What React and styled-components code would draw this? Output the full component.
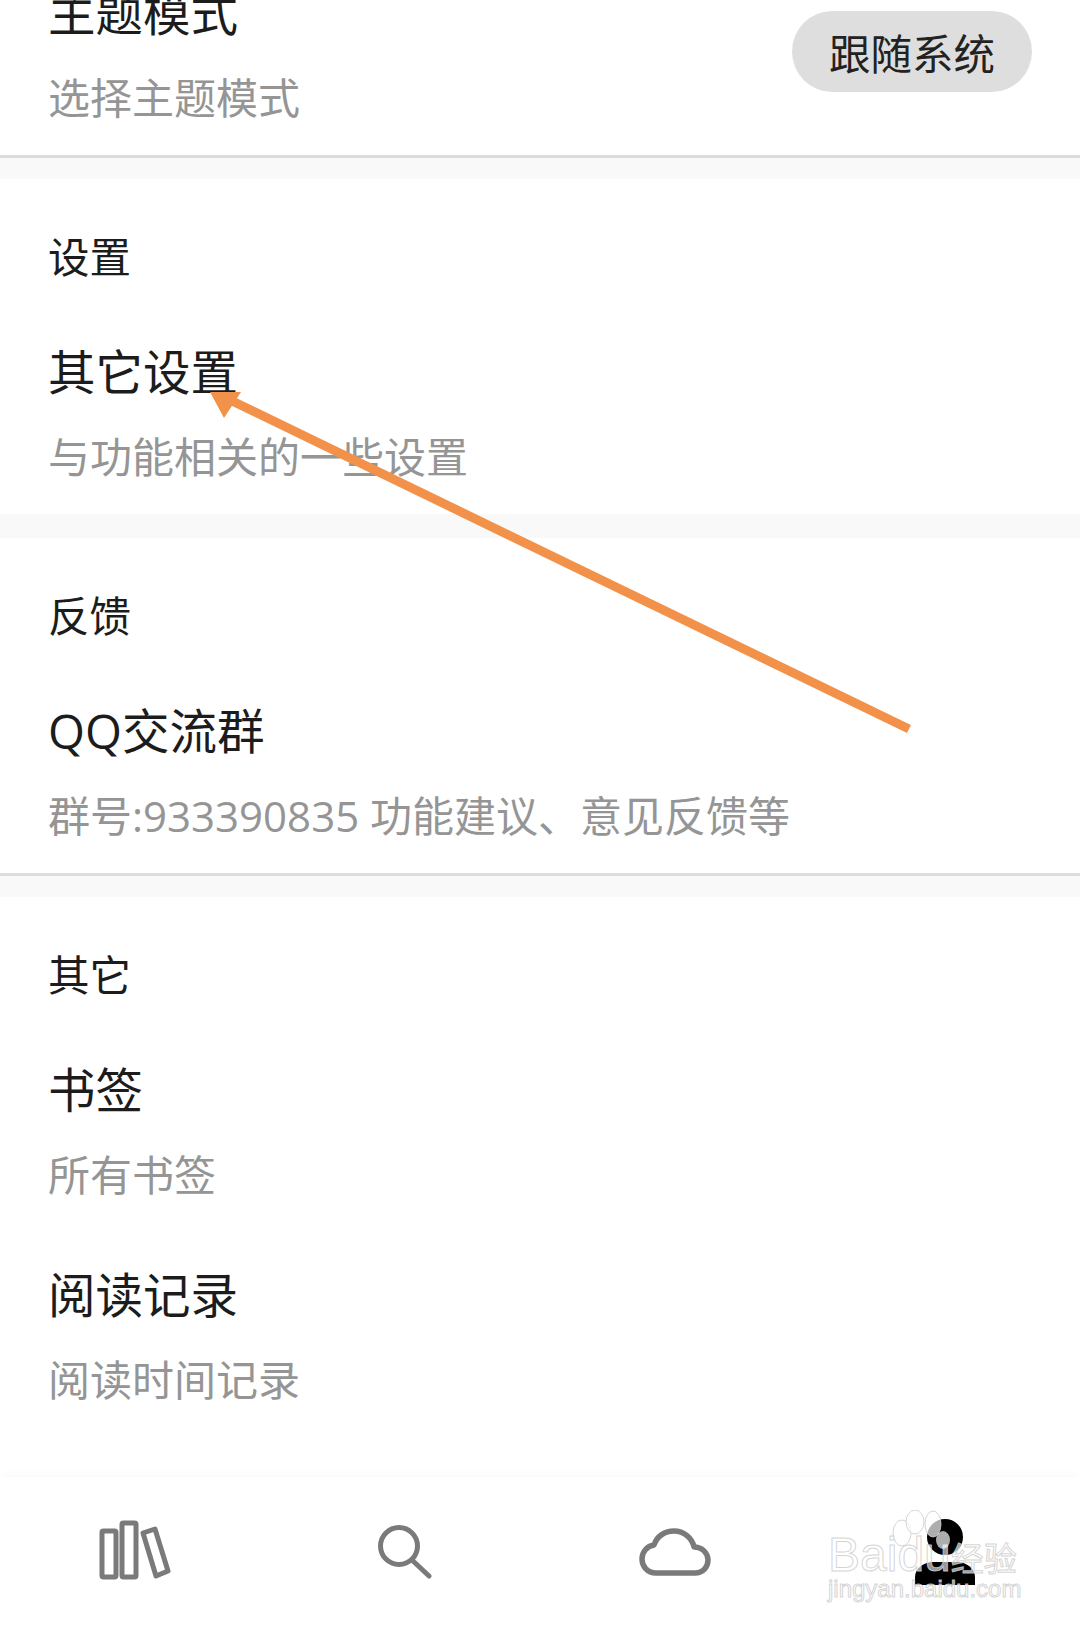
import React from 'react';
import styled, { createGlobalStyle } from 'styled-components';

const GlobalStyle = createGlobalStyle`
  html, body {
    margin: 0;
    padding: 0;
    background: #fff;
    font-family: "Open Sans", "Noto Sans CJK SC", sans-serif;
  }
`;

const Page = styled.div`
  position: relative;
  width: 1080px;
  height: 1627px;
  overflow: hidden;
  background: #fff;
  display: flex;
  flex-direction: column;
`;

const Content = styled.div`
  flex: 1;
`;

const Section = styled.section`
  padding: 48px 48px 27px 48px;
  border-bottom: ${(p) => (p.$line ? '3px solid #dcdcdc' : 'none')};
`;

const TopSection = styled(Section)`
  padding-top: 0;
  margin-top: -17px;
`;

const Band = styled.div`
  height: ${(p) => (p.$short ? '21px' : '24px')};
  background: #f9f9f9;
`;

const SectionTitle = styled.h2`
  margin: 0 0 55px;
  font-size: 41.5px;
  line-height: 60px;
  font-weight: 400;
  color: #1c1c1c;
`;

const Row = styled.div`
  display: flex;
  justify-content: space-between;
  align-items: flex-start;
  & + & {
    margin-top: 60px;
  }
`;

const RowTitle = styled.div`
  font-size: 47.5px;
  line-height: 60px;
  color: #1c1c1c;
`;

const RowSub = styled.div`
  margin-top: 25px;
  font-size: 42px;
  line-height: 60px;
  color: #959595;
`;

const Pill = styled.div`
  margin-top: 28px;
  width: 240px;
  height: 81px;
  border-radius: 41px;
  background: #dedede;
  color: #222;
  font-size: 41.5px;
  display: flex;
  align-items: center;
  justify-content: center;
`;

const Nav = styled.nav`
  height: 150px;
  display: grid;
  grid-template-columns: repeat(4, 270px);
  background: #fff;
  box-shadow: 0 -6px 8px -2px rgba(0, 0, 0, 0.025);
`;

const NavItem = styled.div`
  display: flex;
  align-items: center;
  justify-content: center;
  padding-bottom: ${(p) => p.$pb || 0}px;
`;

const ArrowLayer = styled.svg`
  position: absolute;
  left: 0;
  top: 0;
  pointer-events: none;
`;

const Watermark = styled.div`
  position: absolute;
  left: 828px;
  top: 1510px;
  width: 200px;
  height: 100px;
  pointer-events: none;
`;

const Paw = styled.svg`
  position: absolute;
  left: 0;
  top: 0;
`;

const MarkLine = styled.div`
  position: absolute;
  left: 0;
  top: ${(p) => p.$top}px;
  white-space: nowrap;
  font-family: "Liberation Sans", "Noto Sans CJK SC", sans-serif;
  font-size: ${(p) => p.$size}px;
  line-height: 1;
  color: rgba(255, 255, 255, 0.6);
  -webkit-text-stroke: 1px rgba(205, 205, 205, 0.85);
`;

const MarkCjk = styled.span`
  font-size: 33px;
`;

const BooksIcon = () => (
  <svg width="72" height="60" viewBox="0 0 72 60" fill="none" stroke="#7a7a7a" strokeWidth="5" strokeLinejoin="round">
    <rect x="3" y="11" width="14" height="46" rx="1.5" />
    <rect x="23" y="3" width="14" height="54" rx="1.5" />
    <path d="M44 13 L56 9 L69 51 L57 56 Z" />
  </svg>
);

const SearchIcon = () => (
  <svg width="54" height="54" viewBox="0 0 54 54" fill="none" stroke="#7a7a7a" strokeWidth="5" strokeLinecap="round">
    <circle cx="21" cy="21" r="18.5" />
    <path d="M34 35 L51 51" />
  </svg>
);

const CloudIcon = () => (
  <svg width="72" height="48" viewBox="0 0 72 48" fill="none" stroke="#7a7a7a" strokeWidth="5.5" strokeLinejoin="round">
    <path d="M17 45 C8 45 3 38 3 31 C3 24 8 18 15 17 C18 8 26 3 35 3 C45 3 53 10 55 19 C63 19 69 25 69 32 C69 39 64 45 56 45 Z" />
  </svg>
);

const UserIcon = () => (
  <svg width="60" height="66" viewBox="0 0 60 66" fill="#000">
    <circle cx="30" cy="18" r="18" />
    <path d="M0 66 V58 C0 50 8 43 18 43 H42 C52 43 60 50 60 58 V66 Z" />
  </svg>
);

const App = () => (
  <Page>
    <GlobalStyle />
    <Content>
      <TopSection $line>
        <Row>
          <div>
            <RowTitle>主题模式</RowTitle>
            <RowSub>选择主题模式</RowSub>
          </div>
          <Pill>跟随系统</Pill>
        </Row>
      </TopSection>
      <Band $short />
      <Section>
        <SectionTitle>设置</SectionTitle>
        <Row>
          <div>
            <RowTitle>其它设置</RowTitle>
            <RowSub>与功能相关的一些设置</RowSub>
          </div>
        </Row>
      </Section>
      <Band />
      <Section $line>
        <SectionTitle>反馈</SectionTitle>
        <Row>
          <div>
            <RowTitle>QQ交流群</RowTitle>
            <RowSub>群号:933390835 功能建议、意见反馈等</RowSub>
          </div>
        </Row>
      </Section>
      <Band $short />
      <Section>
        <SectionTitle>其它</SectionTitle>
        <Row>
          <div>
            <RowTitle>书签</RowTitle>
            <RowSub>所有书签</RowSub>
          </div>
        </Row>
        <Row>
          <div>
            <RowTitle>阅读记录</RowTitle>
            <RowSub>阅读时间记录</RowSub>
          </div>
        </Row>
      </Section>
    </Content>
    <Nav>
      <NavItem $pb={4}><BooksIcon /></NavItem>
      <NavItem><SearchIcon /></NavItem>
      <NavItem><CloudIcon /></NavItem>
      <NavItem><UserIcon /></NavItem>
    </Nav>

    {/* 스크린샷 위에 그려진 화살표 */}
    <ArrowLayer width="1080" height="1627" viewBox="0 0 1080 1627">
      <path d="M909 729 L228 399" stroke="#f2924a" strokeWidth="9" fill="none" />
      <path d="M210 392 L241 392 L224 418 Z" fill="#f2924a" />
    </ArrowLayer>

    <Watermark>
      <MarkLine $top={21} $size={48}>Baidu<MarkCjk>经验</MarkCjk></MarkLine>
      <MarkLine $top={67} $size={24}>jingyan.baidu.com</MarkLine>
      <Paw width="200" height="60" viewBox="0 0 200 60" fill="rgba(255,255,255,0.68)" stroke="rgba(205,205,205,0.85)">
        <ellipse cx="74" cy="23" rx="9" ry="13" />
        <ellipse cx="87" cy="12" rx="9" ry="12" />
        <ellipse cx="105" cy="14" rx="8" ry="13" />
        <ellipse cx="115" cy="30" rx="7" ry="9" stroke="none" />
      </Paw>
    </Watermark>
  </Page>
);

export default App;
